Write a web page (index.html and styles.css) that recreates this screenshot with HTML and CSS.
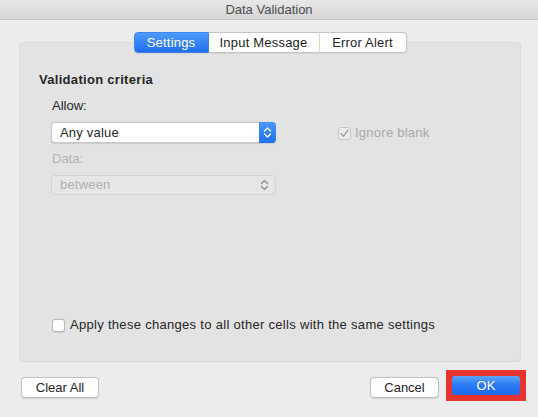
FILE: index.html
```html
<!DOCTYPE html>
<html>
<head>
<meta charset="utf-8">
<link rel="stylesheet" href="styles.css">
</head>
<body>
<div class="window">
  <div class="titlebar">Data Validation</div>
  <div class="content">
    <div class="tabs">
      <div class="tab tab-active tab-settings">Settings</div>
      <div class="tab tab-input">Input Message</div>
      <div class="tab tab-error">Error Alert</div>
    </div>
    <div class="panel">
      <div class="section-title">Validation criteria</div>
      <div class="field-label">Allow:</div>
      <div class="row">
        <div class="select">
          <span class="select-text">Any value</span>
          <span class="select-arrow">
            <svg width="17" height="19" viewBox="0 0 17 19"><path d="M5.5 8 L8.5 5 L11.5 8 M5.5 11 L8.5 14 L11.5 11" fill="none" stroke="#fff" stroke-width="1.4" stroke-linecap="round" stroke-linejoin="round"/></svg>
          </span>
        </div>
        <div class="check check-disabled">
          <span class="box box-disabled">
            <svg width="11" height="11" viewBox="0 0 11 11"><path d="M2.2 5.8 L4.4 8.2 L8.8 2.4" fill="none" stroke="#a4a4a4" stroke-width="1.5" stroke-linecap="round" stroke-linejoin="round"/></svg>
          </span>
          <span class="check-label-disabled">Ignore blank</span>
        </div>
      </div>
      <div class="field-label label-disabled">Data:</div>
      <div class="select select-disabled">
        <span class="select-text">between</span>
        <span class="select-arrow-disabled">
          <svg width="17" height="18" viewBox="0 0 17 18"><path d="M5.5 7.5 L8.5 4.5 L11.5 7.5 M5.5 10.5 L8.5 13.5 L11.5 10.5" fill="none" stroke="#8e8e8e" stroke-width="1.3" stroke-linecap="round" stroke-linejoin="round"/></svg>
        </span>
      </div>
      <div class="check apply">
        <span class="box"></span>
        <span class="apply-label">Apply these changes to all other cells with the same settings</span>
      </div>
    </div>
    <div class="buttons">
      <div class="btn btn-clear">Clear All</div>
      <div class="spacer"></div>
      <div class="btn btn-cancel">Cancel</div>
      <div class="highlight">
        <div class="btn-ok">OK</div>
      </div>
    </div>
  </div>
</div>
</body>
</html>
```

FILE: styles.css
```css
html, body {
  margin: 0;
  padding: 0;
}
body {
  width: 538px;
  height: 417px;
  overflow: hidden;
  background: #ececec;
  font-family: "Liberation Sans", Helvetica, Arial, sans-serif;
  font-size: 13px;
  color: #262626;
}
.window {
  width: 538px;
  height: 417px;
}
.titlebar {
  height: 19px;
  line-height: 19px;
  text-align: center;
  color: #4d4d4d;
  background: linear-gradient(#e8e8e8, #d6d6d6);
  border-bottom: 1px solid #c2c2c2;
}
.content {
  padding: 12px 17px 0 19px;
}
.tabs {
  display: flex;
  justify-content: center;
  height: 21px;
  position: relative;
  z-index: 1;
}
.tab {
  box-sizing: border-box;
  height: 21px;
  line-height: 19px;
  text-align: center;
  background: #fff;
  border: 1px solid #c6c6c6;
  border-left: none;
  color: #1e1e1e;
  letter-spacing: 0.2px;
  box-shadow: 0 0.5px 1px rgba(0,0,0,0.08);
}
.tab-settings {
  width: 75px;
  border-left: 1px solid #3d86f2;
  border-color: #3d86f2;
  border-radius: 4px 0 0 4px;
}
.tab-input {
  width: 111px;
  border-right: 1px solid #dcdcdc;
}
.tab-error {
  width: 87px;
  border-radius: 0 4px 4px 0;
}
.tab-active {
  color: #fff;
  background: linear-gradient(#4f9bf8, #1f6ff0);
}
.panel {
  box-sizing: border-box;
  margin-top: -11px;
  height: 320px;
  width: 502px;
  background: #e3e3e3;
  border: 1px solid #dadada;
  border-radius: 4px;
  padding: 29px 0 0 0;
  display: flex;
  flex-direction: column;
  line-height: 16px;
}
.section-title {
  font-weight: bold;
  margin-left: 19px;
  letter-spacing: 0.3px;
}
.field-label {
  margin-left: 32px;
  margin-top: 10px;
}
.label-disabled {
  color: #b3b3b3;
  margin-top: 8px;
}
.row {
  display: flex;
  align-items: center;
  margin-top: 8px;
}
.select {
  box-sizing: border-box;
  width: 225px;
  height: 21px;
  margin-left: 31px;
  background: #fff;
  border: 1px solid #c9c9c9;
  border-radius: 4px;
  display: flex;
  align-items: center;
  box-shadow: 0 0.5px 1px rgba(0,0,0,0.12);
}
.select-text {
  flex: 1;
  padding-left: 8px;
  line-height: 19px;
  letter-spacing: 0.2px;
}
.select-arrow {
  width: 17px;
  height: 21px;
  margin: -1px -1px -1px 0;
  background: linear-gradient(#4b98f8, #1f6ff0);
  border-radius: 0 4px 4px 0;
  display: flex;
  align-items: center;
  justify-content: center;
}
.select-disabled {
  height: 20px;
  margin-top: 8px;
  background: #e6e6e6;
  border-color: #d3d3d3;
  color: #b0b0b0;
  box-shadow: none;
}
.select-disabled .select-text {
  line-height: 18px;
}
.select-arrow-disabled {
  width: 17px;
  height: 18px;
  margin-right: 2px;
  display: flex;
  align-items: center;
  justify-content: center;
}
.check {
  display: flex;
  align-items: center;
}
.check-disabled {
  margin-left: 62px;
  margin-top: 1px;
}
.box {
  box-sizing: border-box;
  width: 13px;
  height: 13px;
  border: 1px solid #b8b8b8;
  border-radius: 3px;
  background: #fff;
  margin-right: 5px;
  display: flex;
  align-items: center;
  justify-content: center;
  box-shadow: 0 0.5px 1px rgba(0,0,0,0.1);
}
.box-disabled {
  background: #ececec;
  border-color: #c6c6c6;
  margin-right: 4px;
  box-shadow: none;
}
.check-label-disabled {
  color: #a8a8a8;
  letter-spacing: 0.25px;
}
.apply {
  margin-top: auto;
  margin-left: 32px;
  margin-bottom: 28px;
}
.apply-label {
  letter-spacing: 0.3px;
}
.buttons {
  display: flex;
  align-items: flex-start;
  margin-top: 8px;
  margin-right: -5px;
}
.btn {
  box-sizing: border-box;
  height: 21px;
  line-height: 19px;
  margin-top: 7px;
  text-align: center;
  background: #fff;
  border: 1px solid #c4c4c4;
  border-radius: 4px;
  box-shadow: 0 0.5px 1px rgba(0,0,0,0.12);
}
.btn-clear {
  width: 78px;
  margin-left: 2px;
}
.spacer {
  flex: 1;
}
.btn-cancel {
  width: 69px;
  margin-right: 7px;
}
.highlight {
  background: #e8332f;
  padding: 6px;
}
.btn-ok {
  width: 68px;
  height: 19px;
  line-height: 19px;
  text-align: center;
  color: #fff;
  border-radius: 3px;
  background: linear-gradient(#5aa4fa, #2a78f2 50%, #1c6aee);
}
```
